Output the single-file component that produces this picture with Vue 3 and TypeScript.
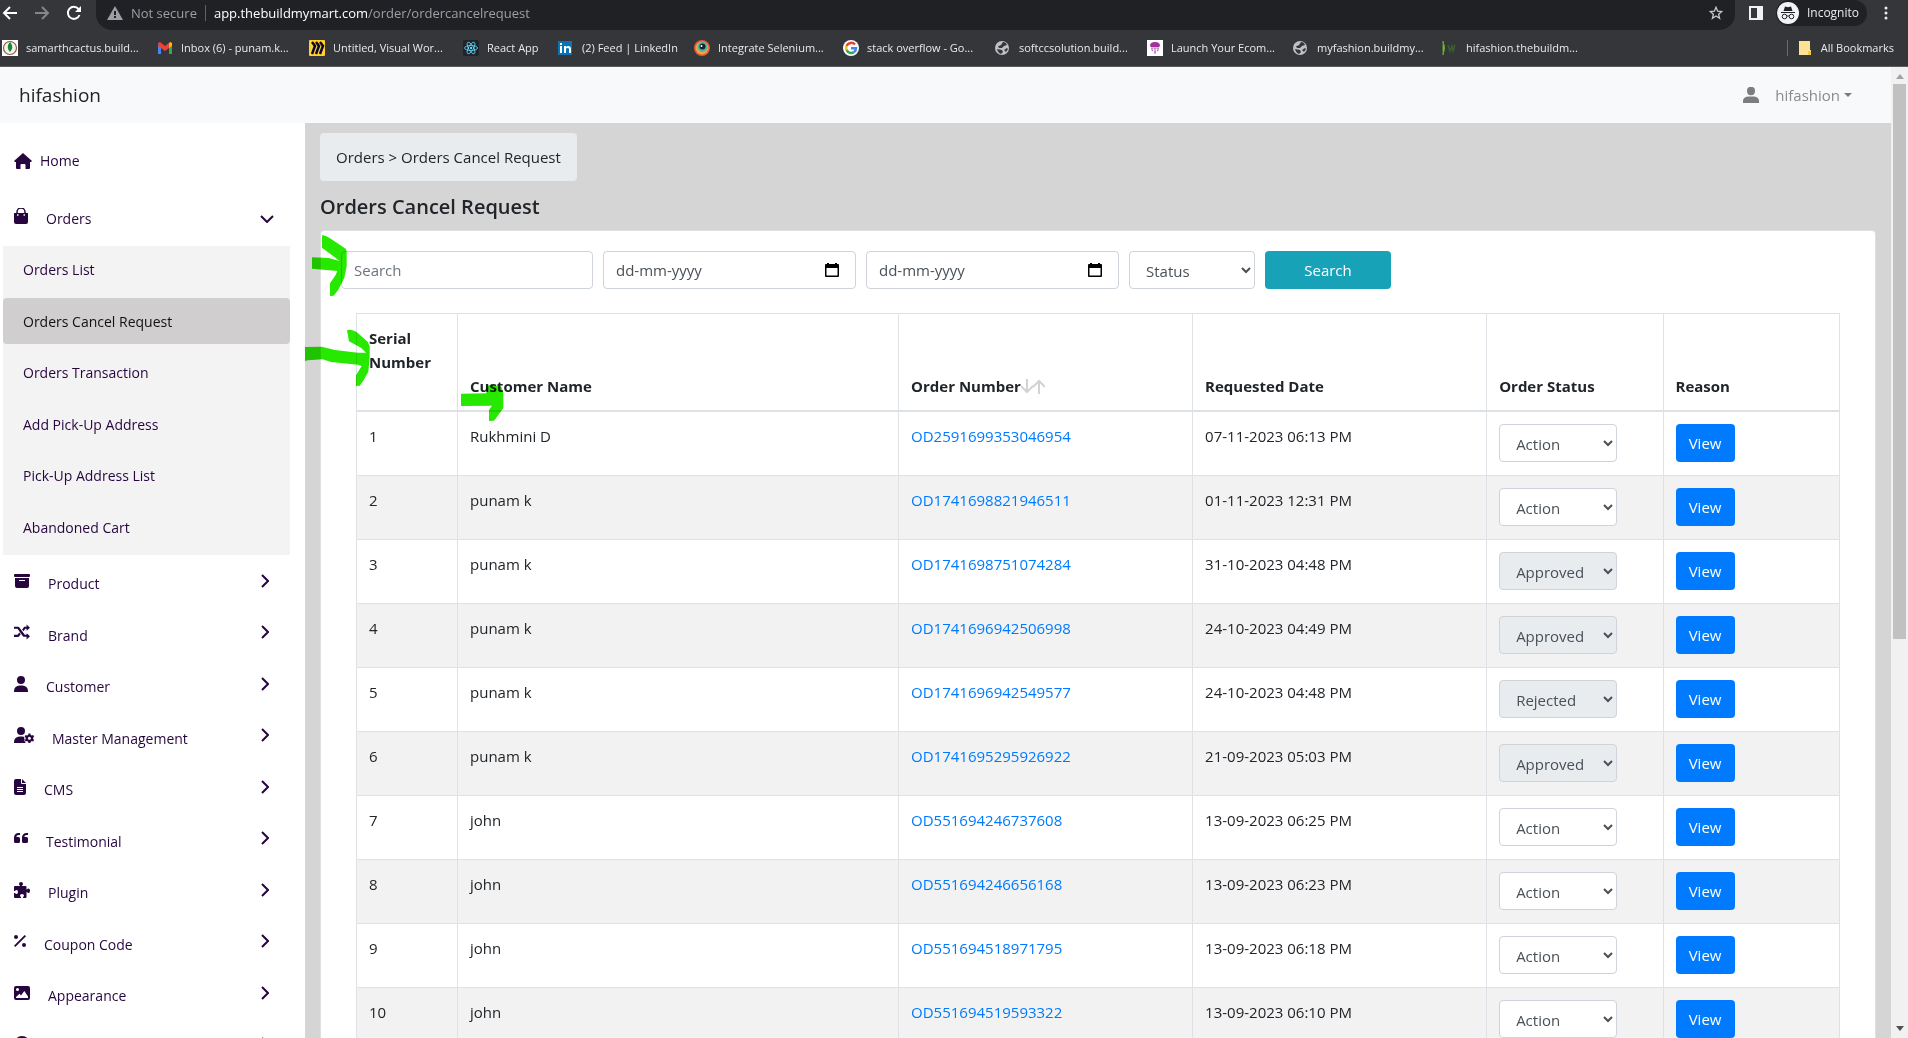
<script setup lang="ts">
import { ref } from 'vue'

interface Bookmark {
  icon: string
  label: string
}

interface MenuItem {
  icon: string
  width: number
  label: string
}

interface OrderRow {
  customer: string
  order: string
  date: string
  status: string
}

const bookmarks: Bookmark[] = [
  { icon: 'cactus', label: 'samarthcactus.build...' },
  { icon: 'gmail', label: 'Inbox (6) - punam.k...' },
  { icon: 'miro', label: 'Untitled, Visual Wor...' },
  { icon: 'react', label: 'React App' },
  { icon: 'linkedin', label: '(2) Feed | LinkedIn' },
  { icon: 'selenium', label: 'Integrate Selenium...' },
  { icon: 'google', label: 'stack overflow - Go...' },
  { icon: 'globe', label: 'softccsolution.build...' },
  { icon: 'launch', label: 'Launch Your Ecom...' },
  { icon: 'globe', label: 'myfashion.buildmy...' },
  { icon: 'leaf', label: 'hifashion.thebuildm...' },
]

const orderLinks: string[] = [
  'Orders List',
  'Orders Cancel Request',
  'Orders Transaction',
  'Add Pick-Up Address',
  'Pick-Up Address List',
  'Abandoned Cart',
]
const activeLink = 'Orders Cancel Request'

const menu: MenuItem[] = [
  { icon: 'box', width: 16, label: 'Product' },
  { icon: 'shuffle', width: 16, label: 'Brand' },
  { icon: 'user', width: 14, label: 'Customer' },
  { icon: 'userGear', width: 20, label: 'Master Management' },
  { icon: 'file', width: 12, label: 'CMS' },
  { icon: 'quote', width: 14, label: 'Testimonial' },
  { icon: 'puzzle', width: 16, label: 'Plugin' },
  { icon: 'percent', width: 12, label: 'Coupon Code' },
  { icon: 'image', width: 16, label: 'Appearance' },
  { icon: 'circle', width: 16, label: '' },
]

const paths: Record<string, string> = {
  box: 'M1 1h14a1 1 0 0 1 1 1v1a1 1 0 0 1-1 1H1a1 1 0 0 1-1-1V2a1 1 0 0 1 1-1zM1 5h14v8a2 2 0 0 1-2 2H3a2 2 0 0 1-2-2zM5 7v1h6V7z',
  shuffle:
    'M12.600.6 16 3.700 12.600 6.800V4.800h-1.300L9.500 7.200 8.100 5.400 10.300 2.700h2.300zM0 2.700h3.200l9 0-8 0q.6 0 1 .5l5.600 7.500h1.800V9.200l3.400 3.100-3.400 3.100v-2.600H9.900q-.6 0-1-.5L3.500 4.800H0zM0 10.700h3.600l1.700-2.200 1.400 1.800-1.700 2.200q-.4.4-1 .4H0z',
  user: 'M7 0a4 4 0 1 1 0 8 4 4 0 0 1 0-8zM5.500 9.500h3A5.500 5.500 0 0 1 14 15v1H0v-1a5.500 5.500 0 0 1 5.500-5.500z',
  userGear:
    'M7 0a4 4 0 1 1 0 8 4 4 0 0 1 0-8zM5.500 9.500h3q1 0 2 .4-.7 1.300.2 2.300-.9 1.400.3 2.600l.7 1.200H0v-1a5.500 5.500 0 0 1 5.500-5.500zM14.500 6.500h1.800l.4 1.400 1.100.6 1.400-.4.9 1.600-1 1v1.200l1 1-.9 1.600-1.400-.4-1.100.6-.4 1.400h-1.800l-.4-1.400-1.100-.6-1.400.4-.9-1.600 1-1v-1.200l-1-1 .9-1.600 1.400.4 1.100-.6zM15.400 9.800a1.500 1.500 0 1 0 0 3 1.500 1.500 0 0 0 0-3z',
  file: 'M2 0h5v4a1 1 0 0 0 1 1h4v9a2 2 0 0 1-2 2H2a2 2 0 0 1-2-2V2a2 2 0 0 1 2-2zM8 0l4 4H8zM3 8v1h6V8zM3 10v1h6v-1zM3 12v1h6v-1z',
  quote:
    'M0 7.500A4.500 4.500 0 0 1 4.500 3H6v2H4.500Q2.500 5 2.300 7H4.500A1.500 1.500 0 0 1 6 8.500v3A1.500 1.500 0 0 1 4.500 13h-3A1.500 1.500 0 0 1 0 11.500zM8 7.500A4.500 4.500 0 0 1 12.500 3H14v2h-1.500q-2 0-2.200 2h2.200A1.500 1.500 0 0 1 14 8.500v3a1.500 1.500 0 0 1-1.500 1.500h-3A1.500 1.500 0 0 1 8 11.500z',
  puzzle:
    'M6 3.500Q5 3 5 2q0-2 2-2t2 2q0 1-1 1.500V4h3.500q1 0 1 1v2.500h.5q.5-1 1.500-1 1.500 0 1.500 2.300T14.500 11q-1 0-1.500-1h-.5v5q0 1-1 1H9v-1q1-.5 1-1.500Q10 12 8 12t-2 1.500Q6 14.500 7 15v1H1q-1 0-1-1V11h1q.5 1 1.500 1Q4 12 4 10T2.500 8Q1.500 8 1 9H0V5q0-1 1-1h5z',
  percent:
    'M2 2a2 2 0 1 1 0 4 2 2 0 0 1 0-4zM10 10a2 2 0 1 1 0 4 2 2 0 0 1 0-4zM10.700 2 12 3.300 1.300 14 0 12.700z',
  image:
    'M2 1h12a2 2 0 0 1 2 2v10a2 2 0 0 1-2 2H2a2 2 0 0 1-2-2V3a2 2 0 0 1 2-2zM3.500 3a1.500 1.500 0 1 0 0 3 1.500 1.500 0 0 0 0-3zM2 13h12v-1.500L10.300 6 7 10.500 5.500 8.800 2 12z',
  circle: 'M8 0a8 8 0 1 1 0 16A8 8 0 0 1 8 0z',
}

const rows: OrderRow[] = [
  { customer: 'Rukhmini D', order: 'OD2591699353046954', date: '07-11-2023 06:13 PM', status: 'Action' },
  { customer: 'punam k', order: 'OD1741698821946511', date: '01-11-2023 12:31 PM', status: 'Action' },
  { customer: 'punam k', order: 'OD1741698751074284', date: '31-10-2023 04:48 PM', status: 'Approved' },
  { customer: 'punam k', order: 'OD1741696942506998', date: '24-10-2023 04:49 PM', status: 'Approved' },
  { customer: 'punam k', order: 'OD1741696942549577', date: '24-10-2023 04:48 PM', status: 'Rejected' },
  { customer: 'punam k', order: 'OD1741695295926922', date: '21-09-2023 05:03 PM', status: 'Approved' },
  { customer: 'john', order: 'OD551694246737608', date: '13-09-2023 06:25 PM', status: 'Action' },
  { customer: 'john', order: 'OD551694246656168', date: '13-09-2023 06:23 PM', status: 'Action' },
  { customer: 'john', order: 'OD551694518971795', date: '13-09-2023 06:18 PM', status: 'Action' },
  { customer: 'john', order: 'OD551694519593322', date: '13-09-2023 06:10 PM', status: 'Action' },
]

const keyword = ref('')
const fromDate = ref('')
const toDate = ref('')
</script>

<template>
  <div class="window">
    <div class="toolbar">
      <button class="nav" aria-label="Back">
        <svg width="16" height="16" viewBox="0 0 16 16" fill="none" stroke="#fff" stroke-width="2"><path d="M15 8H2M8 2 2 8l6 6" /></svg>
      </button>
      <button class="nav" aria-label="Forward">
        <svg width="16" height="16" viewBox="0 0 16 16" fill="none" stroke="#85868a" stroke-width="2"><path d="M1 8h13M8 2l6 6-6 6" /></svg>
      </button>
      <button class="nav" aria-label="Reload">
        <svg width="16" height="16" viewBox="0 0 16 16"><path d="M13.500 10A6 6 0 1 1 12.500 4" fill="none" stroke="#fff" stroke-width="2" /><path d="M15 1v6H9z" fill="#fff" /></svg>
      </button>
      <div class="address">
        <svg width="16" height="14" viewBox="0 0 16 14"><path d="M8 0l8 14H0z" fill="#9aa0a6" /><path d="M7 5h2v4H7zM7 10h2v2H7z" fill="#202124" /></svg>
        <span class="insecure">Not secure</span>
        <span class="url"><b>app.thebuildmymart.com</b>/order/ordercancelrequest</span>
        <svg class="star" width="14" height="14" viewBox="0 0 16 16" fill="none" stroke="#c7c9cc" stroke-width="1.500"><path d="M8 1.500l1.900 4.400 4.700.4-3.600 3.100 1.100 4.600L8 11.500 3.900 14 5 9.400 1.400 6.300l4.700-.4z" /></svg>
      </div>
      <svg width="14" height="14" viewBox="0 0 14 14"><path d="M0 0h14v14H0zM2 2v10h6V2z" fill="#f1f1f1" fill-rule="evenodd" /></svg>
      <div class="incognito">
        <svg width="22" height="22" viewBox="0 0 22 22"><circle cx="11" cy="11" r="11" fill="#f1f3f4" /><path d="M4 10h14v1H4zM6.500 9 8 4.500l3 .8 3-.8L15.500 9z" fill="#202124" /><g fill="none" stroke="#202124"><circle cx="7.500" cy="14.500" r="2.300" /><circle cx="14.500" cy="14.500" r="2.300" /><path d="M10 14h2" /></g></svg>
        <span>Incognito</span>
      </div>
      <svg width="4" height="14" viewBox="0 0 4 14" fill="#eee"><circle cx="2" cy="2" r="1.500" /><circle cx="2" cy="7" r="1.500" /><circle cx="2" cy="12" r="1.500" /></svg>
    </div>

    <nav class="bookmarks" aria-label="Bookmarks">
      <a v-for="mark in bookmarks" :key="mark.label" href="#">
        <svg width="16" height="16" viewBox="0 0 16 16">
          <template v-if="mark.icon === 'cactus'"><path d="M0 0h16v16H0z" fill="#fff" /><circle cx="8" cy="8" r="6.500" fill="#f6f3ee" stroke="#8b5a4a" stroke-width="1.200" /><path d="M8 2c3 3 3 7 0 10-3-3-3-7 0-10z" fill="#178a2d" /></template>
          <template v-else-if="mark.icon === 'gmail'"><path d="M1 3h3v11H1z" fill="#4285f4" /><path d="M12 3h3v11h-3z" fill="#34a853" /><path d="M1 3l2-1 5 4 5-4 2 1v3l-7 5-7-5z" fill="#ea4335" /><path d="M12 4l1-2 2 1v3l-3 2z" fill="#fbbc04" /></template>
          <template v-else-if="mark.icon === 'miro'"><rect width="16" height="16" rx="1" fill="#ffd02f" /><path d="M3 2l3 4-3 8M7 2l3 4-3 8M11 2l3 4-3 8" fill="none" stroke="#0a0a30" stroke-width="2.500" /></template>
          <template v-else-if="mark.icon === 'react'"><rect width="16" height="16" rx="2" fill="#20232a" /><g fill="none" stroke="#61dafb" stroke-width=".8"><ellipse cx="8" cy="8" rx="6.500" ry="2.500" /><ellipse cx="8" cy="8" rx="6.500" ry="2.500" transform="rotate(60 8 8)" /><ellipse cx="8" cy="8" rx="6.500" ry="2.500" transform="rotate(120 8 8)" /></g><circle cx="8" cy="8" r="1.200" fill="#61dafb" /></template>
          <template v-else-if="mark.icon === 'linkedin'"><rect x="0" y="1" width="14" height="14" fill="#0a73b8" /><path d="M2 6h2v7H2zM2 3h2v2H2zM6 6h2v1q1-1 2-1 3 0 3 3v4h-2V9q0-1-1.500-1T8 9v4H6z" fill="#fff" /></template>
          <template v-else-if="mark.icon === 'selenium'"><circle cx="8" cy="8" r="8" fill="#e2583e" /><circle cx="8" cy="8" r="6.500" fill="#f0a63c" /><circle cx="8.500" cy="7" r="5" fill="#4cb7a5" /><circle cx="8.500" cy="6.500" r="3" fill="#14242c" /><circle cx="7.500" cy="6" r="1" fill="#fff" /></template>
          <template v-else-if="mark.icon === 'google'"><circle cx="8" cy="8" r="8" fill="#fff" /><g fill="none" stroke-width="2.500"><path d="M12 4.500A5 5 0 0 0 3.600 6" stroke="#ea4335" /><path d="M3.600 6a5 5 0 0 0 0 4" stroke="#fbbc05" /><path d="M3.600 10a5 5 0 0 0 7.600 2" stroke="#34a853" /><path d="M11.200 12Q13 10.500 13 8.200H8" stroke="#4285f4" /></g></template>
          <template v-else-if="mark.icon === 'globe'"><circle cx="7" cy="8" r="7" fill="#bdc1c6" /><path d="M8 2q3 0 4 3l-3 1-2 2H4L3 6q2 0 3-1zM2 9l5 1 1 2-2 2q-3-1-4-5zM12 8l1 1-2 3-2-2z" fill="#35363a" /></template>
          <template v-else-if="mark.icon === 'launch'"><path d="M0 0h16v16H0z" fill="#fff" /><path d="M3 6q0-4 5-4t5 4l-1 1H4z" fill="#a3319b" /><path d="M5 8v2l1 1M8 8v6M11 8v2l-1 1M4 8h8M7 12h2" fill="none" stroke="#b977b5" stroke-width="1.200" /></template>
          <template v-else><path d="M1 1q3 7 0 14z" fill="#9be04b" stroke="#5da52c" /><path d="M6 5l2 6 2-5 1 5 2-6" fill="none" stroke="#3c5f2e" stroke-width="1.500" /></template>
        </svg>
        <span>{{ mark.label }}</span>
      </a>
      <a class="all" href="#">
        <svg width="12" height="14" viewBox="0 0 12 14"><path d="M0 0h11v9h1v5H0z" fill="#fde293" /><path d="M9 10h3v4H9z" fill="#f5c842" /></svg>
        <span>All Bookmarks</span>
      </a>
    </nav>

    <div class="viewport">
      <div class="site">
        <header class="topbar">
          <a class="brand" href="#">hifashion</a>
          <button class="account">
            <svg width="16" height="16" viewBox="0 0 16 16" fill="#7d7d7d"><ellipse cx="8" cy="4" rx="4" ry="4.200" /><path d="M0 16v-2q0-4 5-4.500h6q5 .5 5 4.500v2z" /></svg>
            <span>hifashion</span>
            <i class="caret"></i>
          </button>
        </header>

        <div class="columns">
          <aside class="sidebar">
            <a class="home" href="#">
              <svg width="18" height="16" viewBox="0 0 18 16" fill="#27063f"><path d="M9 0l9 8-1 1h-1v6q0 1-1 1h-3.500v-4q0-1-1-1h-3q-1 0-1 1v4H3q-1 0-1-1V9H1L0 8z" /></svg>
              Home
            </a>
            <button class="entry orders">
              <svg class="icon" width="14" height="16" viewBox="0 0 14 16"><path d="M3 6V4a4 4 0 0 1 8 0v2" fill="none" stroke="#27063f" stroke-width="1.500" /><path d="M0 5h14v9q0 2-2 2H2q-2 0-2-2z" fill="#27063f" /><path d="M3 7h1.500M9.500 7H11" stroke="#fff" stroke-width="1.500" /></svg>
              <span>Orders</span>
              <svg class="open" width="14" height="8" viewBox="0 0 14 8" fill="none" stroke="#27063f" stroke-width="2"><path d="M1 1l6 6 6-6" /></svg>
            </button>
            <ul class="submenu">
              <li v-for="link in orderLinks" :key="link">
                <a href="#" :class="{ active: link === activeLink }">{{ link }}</a>
              </li>
            </ul>
            <div class="menu">
              <button v-for="item in menu" :key="item.icon" class="entry">
                <svg class="icon" :width="item.width" height="16" :viewBox="`0 0 ${item.width} 16`" fill="#27063f" fill-rule="evenodd"><path :d="paths[item.icon]" /></svg>
                <span>{{ item.label }}</span>
                <svg class="chevron" width="8" height="14" viewBox="0 0 8 14" fill="none" stroke="#27063f" stroke-width="2"><path d="M1 1l6 6-6 6" /></svg>
              </button>
            </div>
          </aside>

          <main class="content">
            <div class="crumbs">Orders &gt; Orders Cancel Request</div>
            <h1>Orders Cancel Request</h1>
            <section class="card">
              <form class="filters" @submit.prevent>
                <input v-model="keyword" class="field muted" type="text" placeholder="Search" aria-label="Search" />
                <label class="field date">
                  <input v-model="fromDate" type="text" placeholder="dd-mm-yyyy" aria-label="From date" />
                  <svg width="14" height="14" viewBox="0 0 14 14"><path d="M2 0h2v1h6V0h2v1h1q1 0 1 1v11q0 1-1 1H1q-1 0-1-1V2q0-1 1-1h1zM1.500 5v7.500h11V5z" fill-rule="evenodd" /></svg>
                </label>
                <label class="field date">
                  <input v-model="toDate" type="text" placeholder="dd-mm-yyyy" aria-label="To date" />
                  <svg width="14" height="14" viewBox="0 0 14 14"><path d="M2 0h2v1h6V0h2v1h1q1 0 1 1v11q0 1-1 1H1q-1 0-1-1V2q0-1 1-1h1zM1.500 5v7.500h11V5z" fill-rule="evenodd" /></svg>
                </label>
                <select class="select" aria-label="Status">
                  <option>Status</option>
                  <option>Approved</option>
                  <option>Rejected</option>
                </select>
                <button class="search" type="submit">Search</button>
              </form>

              <table>
                <colgroup>
                  <col class="c-serial" /><col class="c-name" /><col class="c-wide" /><col class="c-wide" /><col class="c-end" /><col class="c-end" />
                </colgroup>
                <thead>
                  <tr>
                    <th>Serial Number<br />&nbsp;</th>
                    <th>Customer Name</th>
                    <th>Order Number<svg class="sort" width="24" height="15" viewBox="0 0 24 15" fill="none" stroke="#d3d3d3" stroke-width="2"><path d="M6 0v13M0 7l6 6 6-6M18 15V2M12 8l6-6 6 6" /></svg></th>
                    <th>Requested Date</th>
                    <th>Order Status</th>
                    <th>Reason</th>
                  </tr>
                </thead>
                <tbody>
                  <tr v-for="(row, index) in rows" :key="row.order">
                    <td>{{ index + 1 }}</td>
                    <td>{{ row.customer }}</td>
                    <td><a href="#">{{ row.order }}</a></td>
                    <td>{{ row.date }}</td>
                    <td>
                      <select class="select" :value="row.status" :disabled="row.status !== 'Action'" :aria-label="`Status of ${row.order}`">
                        <option>Action</option>
                        <option>Approved</option>
                        <option>Rejected</option>
                      </select>
                    </td>
                    <td><button class="view">View</button></td>
                  </tr>
                </tbody>
              </table>
            </section>
          </main>
        </div>
      </div>

      <div class="scrollbar">
        <svg width="8" height="5" viewBox="0 0 8 5"><path d="M4 0l4 5H0z" fill="#a3a3a3" /></svg>
        <div class="thumb"></div>
        <svg width="8" height="5" viewBox="0 0 8 5"><path d="M4 5l4-5H0z" fill="#505050" /></svg>
      </div>
    </div>

    <svg class="marker" width="220" height="200" viewBox="0 0 660 600" fill="#27e900">
      <path d="M66 31l10 1 14 8 48 32 2 8v44l-7 34-18 36-14 18-11 1V175l17-25 5-12-76-7V97l50 2 33 9-53-40z" />
      <path d="M141 315l12-1 16 6 34 30 6 14v34l-4 42-15 27-11 15-11 1v-32l17-28-12-4-80-8-25-8-44 3-9 2V366l50-1 40 10 69 8 24 0-14-14-37-20z" />
      <path d="M483 506l76-1v-20l15-7 30 8 6 18v45l-26 36-3 2-14 1v-33l9-13-93 1z" />
    </svg>
  </div>
</template>

<style>
html,
body {
  margin: 0;
  overflow: hidden;
}
</style>

<style scoped>
* {
  box-sizing: border-box;
}
.window {
  position: relative;
  display: flex;
  flex-direction: column;
  height: 100vh;
  overflow: hidden;
  font-family: 'Open Sans', 'Noto Sans', sans-serif;
  font-size: 15px;
  line-height: 24px;
  color: #212529;
  background: #fff;
}
a {
  color: inherit;
  text-decoration: none;
}
button {
  font: inherit;
  border: 0;
  padding: 0;
  background: none;
  color: inherit;
  cursor: pointer;
}
svg {
  flex: none;
}
.toolbar {
  display: flex;
  align-items: center;
  flex: none;
  height: 30px;
  padding: 0 20px 4px 2px;
  background: #35363a;
  color: #e8eaed;
  font-size: 12px;
}
.nav {
  display: flex;
  width: 32px;
}
.address {
  display: flex;
  align-items: center;
  flex: 1;
  height: 30px;
  margin: 4px 14px 0 -2px;
  padding: 0 12px 4px 11px;
  background: #202124;
  border-radius: 0 0 16px 16px;
  color: #9aa0a6;
  font-size: 13px;
}
.insecure {
  margin-left: 8px;
  padding-right: 8px;
  border-right: 1px solid #5f6368;
  line-height: 16px;
}
.url {
  margin-left: 8px;
}
.url b {
  font-weight: 400;
  color: #fff;
}
.star {
  margin-left: auto;
}
.incognito {
  display: flex;
  align-items: center;
  gap: 8px;
  height: 26px;
  margin: 0 17px 0 13px;
  padding: 0 8px 0 1px;
  border-radius: 13px;
  background: #202124;
}
.bookmarks {
  display: grid;
  grid-template-columns: 155px 152px 154px 95px 136px 149px 152px 152px 146px 149px 1fr auto;
  align-items: center;
  flex: none;
  height: 37px;
  padding: 0 14px 0 2px;
  background: #35363a;
  border-bottom: 1px solid #5c5b5d;
  color: #e8eaed;
  font-size: 11px;
}
.bookmarks a {
  display: flex;
  align-items: center;
  gap: 8px;
  white-space: nowrap;
}
.bookmarks .all {
  gap: 10px;
  padding-left: 11px;
  border-left: 1px solid #6a6b6e;
  line-height: 16px;
}
.viewport {
  display: flex;
  flex: 1;
  min-height: 0;
}
.site {
  display: flex;
  flex-direction: column;
  flex: 1;
  min-width: 0;
  overflow: hidden;
}
.topbar {
  display: flex;
  align-items: center;
  justify-content: space-between;
  flex: none;
  height: 56px;
  padding: 0 39px 0 19px;
  background: #f8f9fa;
}
.brand {
  font-size: 19px;
}
.account {
  display: flex;
  align-items: center;
  color: #8b8b8b;
}
.account span {
  margin: 0 4px 0 16px;
}
.caret {
  border: 4px solid transparent;
  border-top-color: #7d7d7d;
  border-bottom: 0;
}
.columns {
  display: flex;
  flex: 1;
  min-height: 0;
}
.sidebar {
  flex: none;
  width: 305px;
  padding: 14px 15px 0 3px;
  overflow: hidden;
  color: #27063f;
  font-size: 14px;
}
.home {
  display: flex;
  align-items: center;
  gap: 8px;
  height: 48px;
  padding-left: 11px;
}
.entry {
  display: flex;
  align-items: center;
  width: 100%;
  padding-left: 11px;
}
.entry .icon {
  margin-right: 18px;
}
.entry span {
  padding-top: 7px;
}
.orders {
  height: 61px;
}
.open {
  margin: 6px 16px 0 auto;
}
.chevron {
  margin: 0 21px 0 auto;
}
.submenu {
  display: flex;
  flex-direction: column;
  justify-content: space-between;
  height: 309px;
  margin: 0;
  padding: 0 0 5px;
  list-style: none;
  background: #f3f3f3;
}
.submenu a {
  display: block;
  padding: 12px 20px 10px;
  border-radius: 4px;
}
.submenu .active {
  background: #d0cecf;
  color: #111;
}
.menu {
  display: grid;
  grid-auto-rows: 1fr;
  height: 515px;
}
.content {
  flex: 1;
  min-width: 0;
  padding: 10px 15px 0;
  overflow: hidden;
  background: #d5d5d5;
}
.crumbs {
  width: fit-content;
  padding: 12px 16px;
  background: #e9ecef;
  border-radius: 4px;
}
h1 {
  margin: 9px 0 7px;
  font-size: 20px;
  font-weight: 600;
  line-height: 33px;
}
.card {
  padding: 20px;
  border: 1px solid #dfdfdf;
  border-radius: 4px;
  background: #fff;
}
.filters {
  display: flex;
  gap: 10px;
}
.field {
  flex: 0 1 253px;
  min-width: 0;
  height: 38px;
  padding: 0 12px;
  border: 1px solid #ced4da;
  border-radius: 4px;
  background: #fff;
  font: inherit;
  color: #495057;
}
.muted {
  flex-basis: 252px;
}
.muted::placeholder {
  color: #6c757d;
}
.date {
  display: flex;
  align-items: center;
  padding-right: 16px;
}
.date input {
  flex: 1;
  min-width: 0;
  padding: 0;
  border: 0;
  font: inherit;
  color: inherit;
}
.date input::placeholder {
  color: #495057;
}
.select {
  display: block;
  width: 118px;
  height: 38px;
  padding: 2px 0 0 12px;
  border: 1px solid #ced4da;
  border-radius: 4px;
  background-color: #fff;
  font: inherit;
  color: #495057;
}
.filters .select {
  width: 126px;
}
.select:disabled {
  background-color: #e9ecef;
  opacity: 1;
}
.search {
  width: 126px;
  border-radius: 4px;
  background: #17a2b8;
  color: #fff;
}
table {
  width: calc(100% - 30px);
  margin: 24px 15px 0;
  border-collapse: collapse;
  table-layout: fixed;
}
.c-serial {
  width: 101px;
}
.c-name {
  width: 30%;
}
.c-wide {
  width: 20%;
}
.c-end {
  width: 12%;
}
th,
td {
  padding: 12px;
  border: 1px solid #dee2e6;
  text-align: left;
  vertical-align: top;
}
th {
  vertical-align: bottom;
  border-bottom-width: 2px;
}
td {
  height: 64px;
}
tbody tr:nth-child(even) {
  background: #f2f2f2;
}
td a {
  color: #007bff;
}
.sort {
  vertical-align: -2px;
}
.view {
  display: block;
  width: 59px;
  height: 38px;
  border-radius: 4px;
  background: #007bff;
  color: #fff;
}
.scrollbar {
  display: flex;
  flex-direction: column;
  align-items: center;
  flex: none;
  width: 17px;
  padding: 7px 0;
  background: #f1f1f1;
}
.thumb {
  width: 13px;
  height: 58%;
  margin: 5px 0 auto;
  background: #c1c1c1;
}
.marker {
  position: absolute;
  top: 225px;
  left: 300px;
  mix-blend-mode: multiply;
  pointer-events: none;
}
</style>
